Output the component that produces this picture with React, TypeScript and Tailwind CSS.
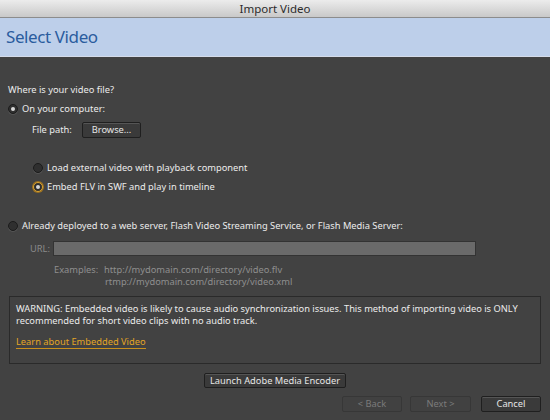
import React from 'react';

function Radio({ checked, focus }: { checked?: boolean; focus?: boolean }) {
  return (
    <span
      className={`relative inline-flex h-[10px] w-[10px] shrink-0 items-center justify-center rounded-full border bg-[#2f2f2f] ${
        focus ? 'border-[#d9a331] shadow-[0_0_0_1px_#9a7022]' : 'border-[#1b1b1b] shadow-[0_1px_0_#555]'
      }`}
    >
      {checked && <span className="h-[4px] w-[4px] rounded-full bg-[#d8d8d8]" />}
    </span>
  );
}

function Btn({
  children,
  disabled,
  className = '',
}: {
  children: React.ReactNode;
  disabled?: boolean;
  className?: string;
}) {
  return (
    <div
      className={`flex items-center justify-center rounded-[2px] border ${
        disabled
          ? 'border-[#373737] bg-[#414141] text-[#7b7b7b]'
          : 'border-[#1f1f1f] bg-[#3a3a3a] text-[#e6e6e6] shadow-[inset_0_1px_0_#555]'
      } ${className}`}
    >
      {children}
    </div>
  );
}

export default function App() {
  return (
    <div
      className="flex h-[420px] w-[550px] flex-col overflow-hidden bg-[#424242] text-[9.3px] text-[#ececec]"
      style={{ fontFamily: '"Noto Sans", "DejaVu Sans", sans-serif' }}
    >
      {/* title bar */}
      <div className="flex h-[18px] items-center justify-center border-b border-[#8c8c8c] bg-gradient-to-b from-[#ececec] to-[#c9c9c9] text-[11.5px] text-[#2b2b2b]">
        Import Video
      </div>

      {/* header */}
      <div className="flex h-[39px] items-center border-b border-[#d5dcea] bg-[#bdcfea] pl-[6px] text-[17px] tracking-[-0.4px] text-[#2a5c9e]">
        Select Video
      </div>

      {/* body */}
      <div className="flex flex-1 flex-col px-[8px]">
        <div className="mt-[26px] flex h-[14px] items-center">Where is your video file?</div>

        <div className="mt-[5px] flex h-[14px] items-center gap-[4px]">
          <Radio checked />
          <span>On your computer:</span>
        </div>

        <div className="mt-[6px] flex h-[16px] items-center pl-[24px]">
          <span className="w-[50px]">File path:</span>
          <Btn className="h-[16px] w-[59px]">Browse...</Btn>
        </div>

        <div className="mt-[23px] flex h-[14px] items-center gap-[4px] pl-[25px]">
          <Radio />
          <span>Load external video with playback component</span>
        </div>

        <div className="mt-[5px] flex h-[14px] items-center gap-[4px] pl-[25px]">
          <Radio checked focus />
          <span>Embed FLV in SWF and play in timeline</span>
        </div>

        <div className="mt-[25px] flex h-[14px] items-center gap-[4px]">
          <Radio />
          <span>Already deployed to a web server, Flash Video Streaming Service, or Flash Media Server:</span>
        </div>

        <div className="mt-[8px] flex h-[15px] items-center text-[#8a8a8a]">
          <span className="w-[45px] pl-[22px]">URL:</span>
          <div className="h-[15px] w-[423px] border border-[#333] bg-[#6a6a6a]" />
        </div>

        <div className="mt-[8px] flex pl-[46px] leading-[12px] text-[#8f8f8f]">
          <span className="w-[50px]">Examples:</span>
          <div className="flex flex-col">
            <span>http://mydomain.com/directory/video.flv</span>
            <span className="pl-[1px]">rtmp://mydomain.com/directory/video.xml</span>
          </div>
        </div>

        <div className="mt-[8px] ml-[1px] h-[68px] w-[532px] border border-[#2a2a2a] px-[6px] pt-[6px] leading-[12px]">
          <p>
            WARNING: Embedded video is likely to cause audio synchronization issues. This method of importing video is
            ONLY recommended for short video clips with no audio track.
          </p>
          <p className="mt-[9px]">
            <span className="border-b border-[#c9901d] text-[#e3a525]">Learn about Embedded Video</span>
          </p>
        </div>

        <div className="mt-[9px] flex justify-center">
          <Btn className="h-[15px] w-[142px]">Launch Adobe Media Encoder</Btn>
        </div>

        <div className="mt-[8px] flex justify-end gap-[8px] pr-[1px]">
          <Btn disabled className="h-[16px] w-[60px]">
            &lt; Back
          </Btn>
          <Btn disabled className="h-[16px] w-[61px]">
            Next &gt;
          </Btn>
          <Btn className="ml-[2px] h-[16px] w-[60px]">Cancel</Btn>
        </div>
      </div>
    </div>
  );
}
